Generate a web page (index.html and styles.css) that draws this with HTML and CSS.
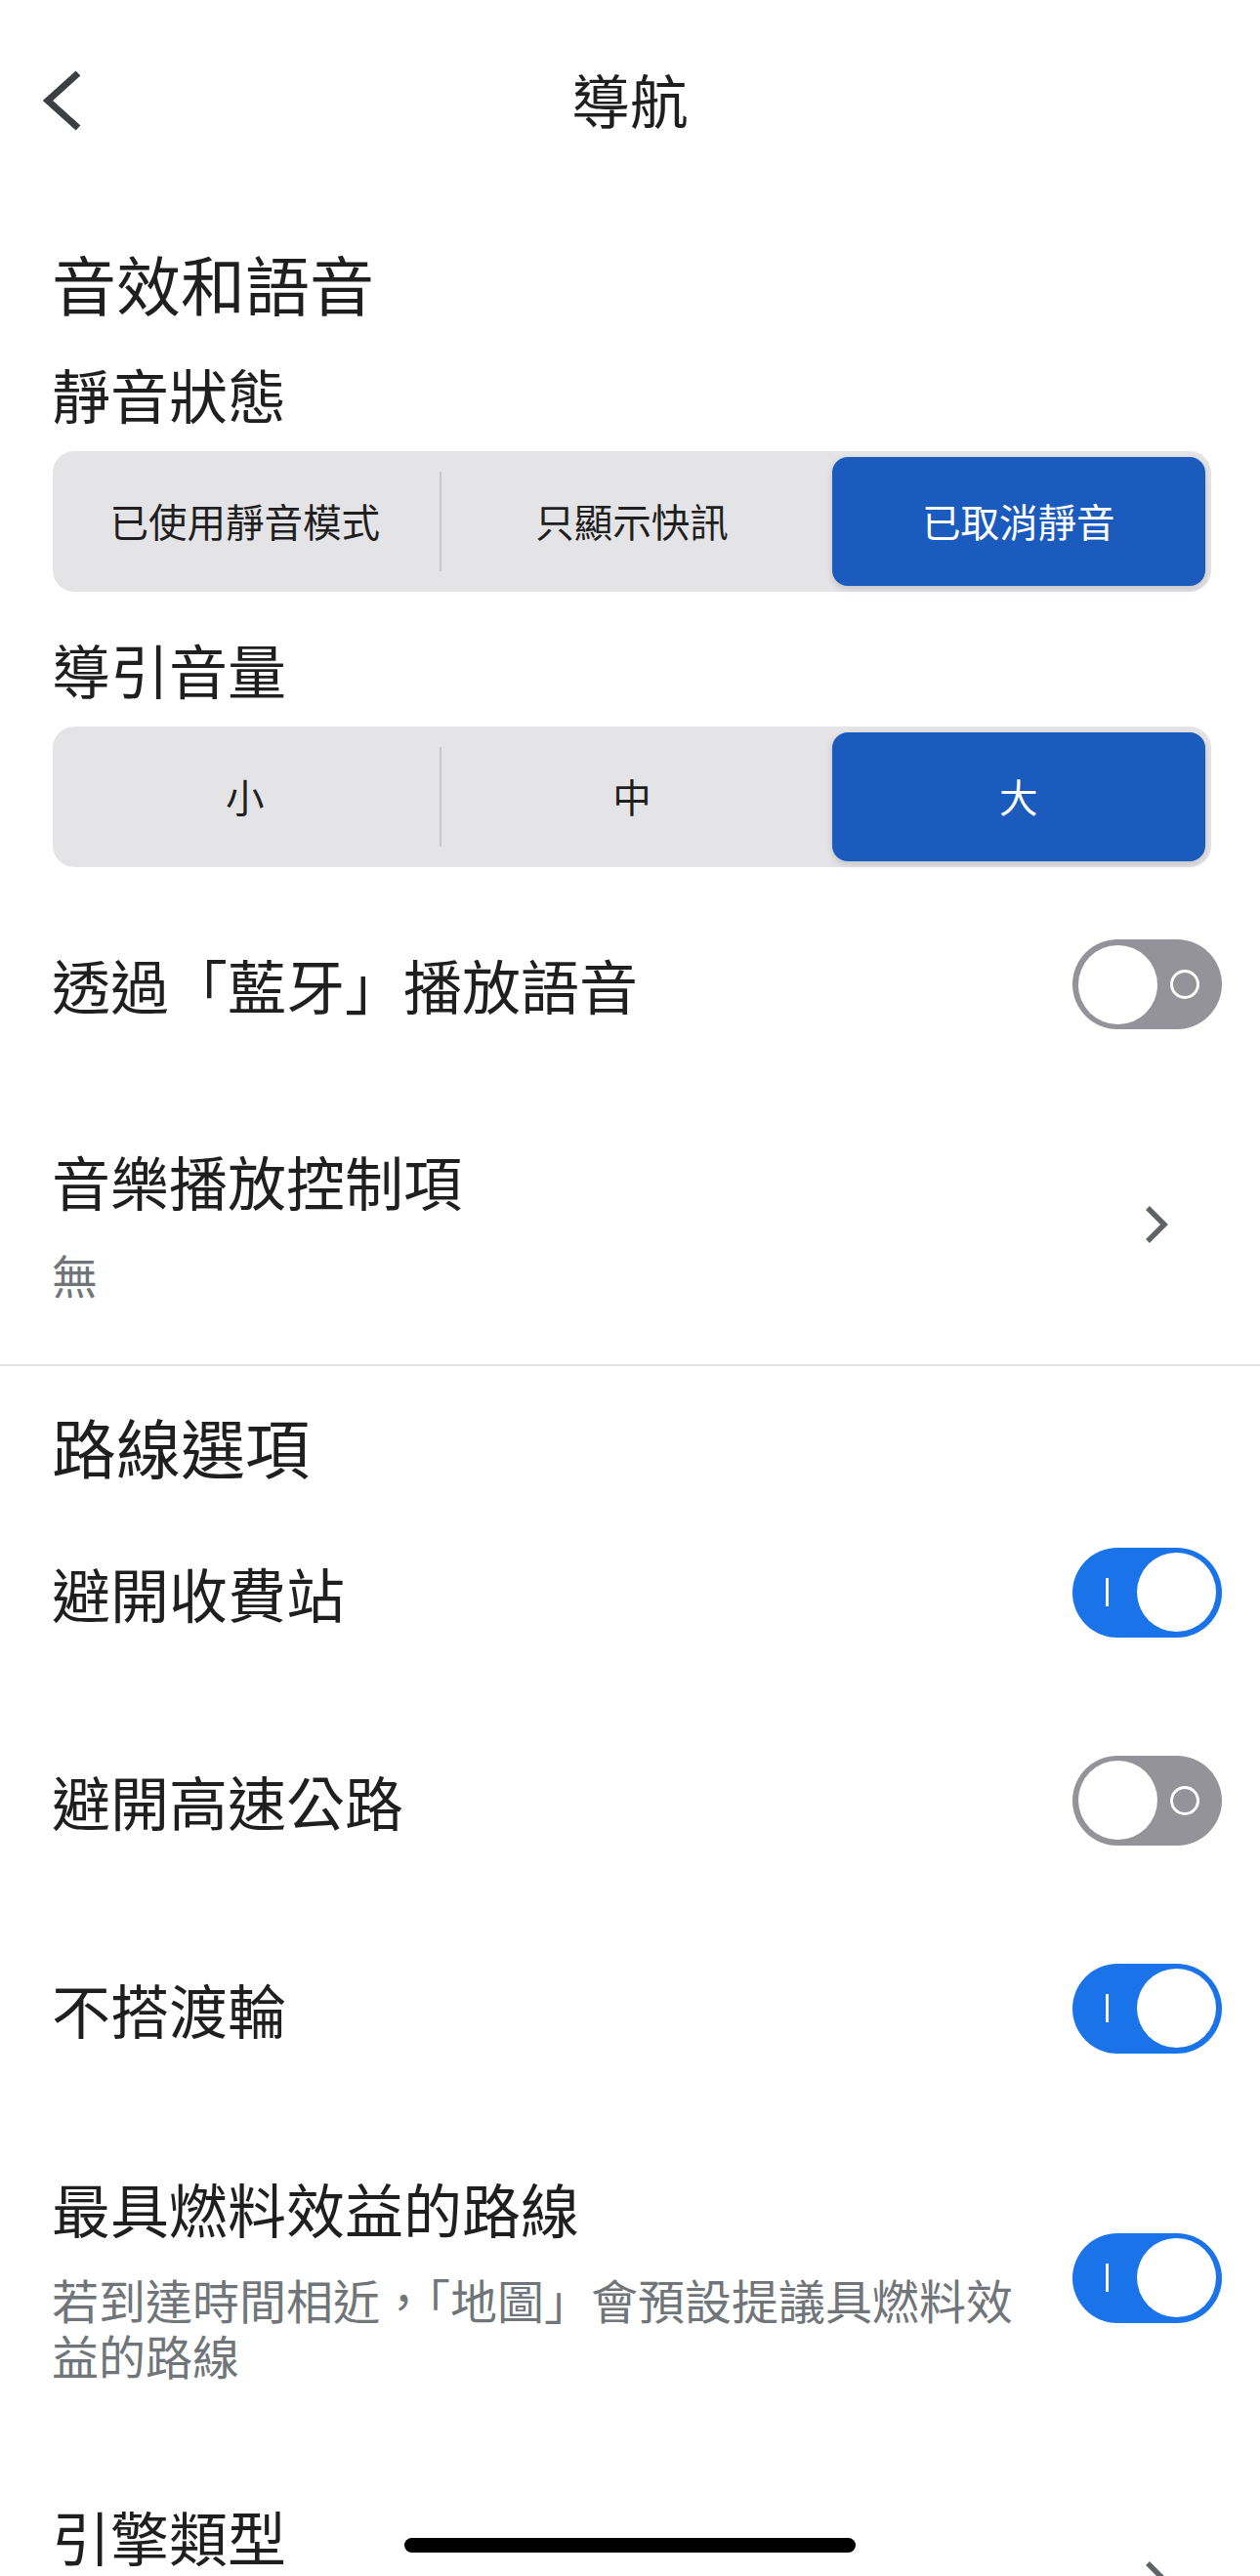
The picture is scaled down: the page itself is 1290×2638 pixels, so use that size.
FILE: index.html
```html
<!DOCTYPE html>
<html lang="zh-Hant">
<head>
  <meta charset="UTF-8" />
  <meta name="viewport" content="width=device-width, initial-scale=1.0"/>
  <title>導航</title>
  <link rel="stylesheet" href="styles.css">
</head>
<body>

  <header class="nav">
    <button class="back" aria-label="返回">
      <svg width="44" height="64" viewBox="0 0 44 64">
        <polyline points="36,4 5,32 36,60" fill="none" stroke="#3c4043" stroke-width="7"/>
      </svg>
    </button>
    <h1 class="nav-title">導航</h1>
  </header>

  <section class="section">
    <h2 class="section-title first">音效和語音</h2>

    <h3 class="group-label">靜音狀態</h3>
    <div class="segmented">
      <div class="segment sep">已使用靜音模式</div>
      <div class="segment">只顯示快訊</div>
      <div class="segment selected">已取消靜音</div>
    </div>

    <h3 class="group-label spaced">導引音量</h3>
    <div class="segmented">
      <div class="segment sep">小</div>
      <div class="segment">中</div>
      <div class="segment selected">大</div>
    </div>

    <div class="row toggle-row bt-row">
      <div class="row-title">透過「藍牙」播放語音</div>
      <span class="toggle"><span class="knob"></span></span>
    </div>

    <div class="row link-row">
      <div class="row-text">
        <div class="row-title">音樂播放控制項</div>
        <div class="row-sub">無</div>
      </div>
      <svg class="chevron" width="26" height="40" viewBox="0 0 26 40">
        <polyline points="4,3 21,20 4,37" fill="none" stroke="#5f6368" stroke-width="5.5"/>
      </svg>
    </div>
  </section>

  <hr class="divider">

  <section class="section">
    <h2 class="section-title">路線選項</h2>

    <div class="row toggle-row first-row">
      <div class="row-title">避開收費站</div>
      <span class="toggle on"><span class="knob"></span></span>
    </div>

    <div class="row toggle-row">
      <div class="row-title">避開高速公路</div>
      <span class="toggle"><span class="knob"></span></span>
    </div>

    <div class="row toggle-row">
      <div class="row-title">不搭渡輪</div>
      <span class="toggle on"><span class="knob"></span></span>
    </div>

    <div class="row multi-row">
      <div class="row-text">
        <div class="row-title">最具燃料效益的路線</div>
        <div class="row-desc">若到達時間相近，「地圖」會預設提議具燃料效益的路線</div>
      </div>
      <span class="toggle on"><span class="knob"></span></span>
    </div>

    <div class="row link-row">
      <div class="row-text tall">
        <div class="row-title">引擎類型</div>
      </div>
      <svg class="chevron" width="26" height="40" viewBox="0 0 26 40">
        <polyline points="4,3 21,20 4,37" fill="none" stroke="#5f6368" stroke-width="5.5"/>
      </svg>
    </div>
  </section>

  <div class="home-indicator"></div>

</body>
</html>
```

FILE: styles.css
```css
html, body {
  margin: 0;
  height: 2638px;
  overflow: hidden;
}

body {
  font-family: "Noto Sans CJK TC", "Noto Sans", sans-serif;
  background: #fff;
  color: #1f1f1f;
  position: relative;
}

/* top bar */
.nav {
  height: 202px;
  display: flex;
  align-items: center;
  justify-content: center;
  position: relative;
}

.back {
  position: absolute;
  left: 44px;
  top: 71px;
  padding: 0;
  border: 0;
  background: none;
  display: flex;
}

.nav-title {
  margin: 0;
  font-size: 60px;
  font-weight: 400;
  line-height: 80px;
}

/* sections */
.section {
  padding: 0 39px 0 53px;
}

.section-title {
  margin: 41px 0 0;
  font-size: 66px;
  font-weight: 400;
  line-height: 80px;
}

.section-title.first {
  margin-top: 47px;
}

.group-label {
  margin: 38px 0 0;
  font-size: 60px;
  font-weight: 400;
  line-height: 72px;
}

.group-label.spaced {
  margin-top: 43px;
}

/* segmented control */
.segmented {
  margin: 23px 11px 0 1px;
  height: 144px;
  box-sizing: border-box;
  padding: 6px;
  background: #e4e4e6;
  border-radius: 22px;
  display: grid;
  grid-template-columns: repeat(3, 1fr);
}

.segment {
  display: flex;
  align-items: center;
  justify-content: center;
  font-size: 39.5px;
  line-height: 1;
  padding-bottom: 3px;
  color: #1f1f1f;
  position: relative;
}

.segment.sep {
  padding-right: 10px;
}

.segment.sep::after {
  content: "";
  position: absolute;
  right: -1px;
  top: 15px;
  bottom: 15px;
  width: 2px;
  background: #c8c8cc;
}

.segment.selected {
  margin-left: 9px;
  background: #1b5bbd;
  color: #fff;
  border-radius: 16px;
  box-shadow: 0 3px 7px rgba(0, 0, 0, 0.14);
}

/* rows */
.row {
  display: flex;
  align-items: center;
  justify-content: space-between;
}

.row-title {
  font-size: 60px;
  line-height: 72px;
}

.toggle-row {
  height: 213px;
}

.bt-row {
  height: 212px;
  margin-top: 14px;
}

.first-row {
  margin-top: 4px;
}

.link-row {
  padding: 59px 0 62px;
}

.link-row .chevron {
  margin-right: 54px;
}

.row-text {
  flex: 1;
}

.row-text.tall {
  min-height: 162px;
}

.row-sub {
  margin-top: 30px;
  font-size: 47px;
  line-height: 60px;
  color: #70757a;
}

.multi-row {
  padding: 62px 0;
  gap: 30px;
}

.row-desc {
  margin-top: 29px;
  font-size: 48px;
  line-height: 57px;
  color: #70757a;
}

.divider {
  margin: 0;
  border: 0;
  height: 2px;
  background: #e3e3e3;
}

/* switch */
.toggle {
  flex-shrink: 0;
  position: relative;
  width: 153px;
  height: 92px;
  border-radius: 46px;
  background: #939399;
}

.toggle::before {
  content: "";
  position: absolute;
  left: 100px;
  top: 31px;
  width: 24px;
  height: 24px;
  border: 3px solid #fff;
  border-radius: 50%;
}

.toggle .knob {
  position: absolute;
  left: 6px;
  top: 5.5px;
  width: 81px;
  height: 81px;
  border-radius: 50%;
  background: #fff;
}

.toggle.on {
  background: #1a73e8;
}

.toggle.on::before {
  left: 34px;
  top: 31.5px;
  width: 3px;
  height: 29px;
  border: 0;
  border-radius: 0;
  background: #fff;
}

.toggle.on .knob {
  left: 66px;
}

.home-indicator {
  position: absolute;
  left: 414px;
  bottom: 24px;
  width: 462px;
  height: 15px;
  border-radius: 8px;
  background: #000;
}
```
